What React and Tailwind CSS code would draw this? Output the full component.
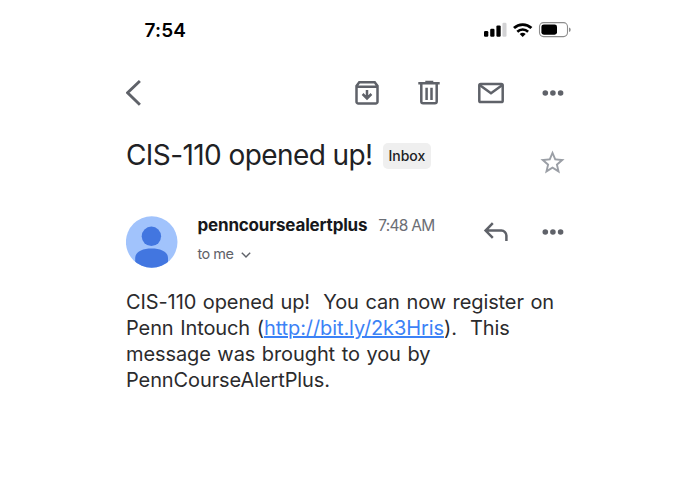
import React from 'react';

function StatusIcons() {
  return (
    <svg width="88" height="20" viewBox="0 0 88 20" className="shrink-0">
      {/* signal */}
      <rect x="1" y="11" width="4.3" height="5.8" rx="1.2" />
      <rect x="7.2" y="8.8" width="4.3" height="8" rx="1.2" />
      <rect x="13.4" y="5.4" width="4.3" height="11.4" rx="1.2" />
      <rect x="19.4" y="2.8" width="4.1" height="14" rx="1.2" fill="#d2d2d4" />
      {/* wifi */}
      <path d="M31 8.1a12.6 12.6 0 0 1 17.4 0" fill="none" stroke="#000" strokeWidth="2.8" />
      <path d="M34.3 11.7a7.8 7.8 0 0 1 10.8 0" fill="none" stroke="#000" strokeWidth="2.6" />
      <path d="M36.7 14.1a4.4 4.4 0 0 1 6 0l-3 2.9z" />
      {/* battery */}
      <rect x="56.5" y="2.6" width="28" height="14" rx="4" fill="none" stroke="#8c8c8c" strokeWidth="1.1" />
      <rect x="58.4" y="4.4" width="15.6" height="10.3" rx="2.4" />
      <path d="M86 7.4a2.4 2.4 0 0 1 0 4.6z" fill="#8c8c8c" />
    </svg>
  );
}

function Icon({ children }) {
  return (
    <svg width="28" height="28" viewBox="0 0 28 28" fill="none" stroke="#5f6269" strokeWidth="2.5" className="shrink-0">
      {children}
    </svg>
  );
}

function Dots() {
  return (
    <Icon>
      <g fill="#5f6269" stroke="none">
        <circle cx="6.3" cy="14" r="2.8" />
        <circle cx="13.9" cy="14" r="2.8" />
        <circle cx="21.6" cy="14" r="2.8" />
      </g>
    </Icon>
  );
}

function Avatar() {
  return (
    <svg width="52" height="52" viewBox="0 0 52 52" className="shrink-0">
      <clipPath id="avatar">
        <circle cx="25.7" cy="26" r="25.8" />
      </clipPath>
      <g clipPath="url(#avatar)">
        <rect width="52" height="52" fill="#a1c3fc" />
        <circle cx="25.4" cy="20.3" r="9.7" fill="#4276e0" />
        <path d="M9.2 54V42c0-6 7-9.4 16.4-9.4S42 36 42 42v12z" fill="#4276e0" />
      </g>
    </svg>
  );
}

function App() {
  return (
    <div className="h-[494px] w-[695px] overflow-hidden bg-white font-['Inter',sans-serif]">
      <div className="ml-[126px] w-[441px]">
        <div className="-mr-1 flex h-[60px] items-end justify-between pb-[20px] pl-[18.5px]">
          <span className="text-[19px] leading-[19px] font-semibold tracking-[0.15px] text-black">7:54</span>
          <StatusIcons />
        </div>

        <div className="flex items-center gap-[34px] pt-[19px]">
          <div className="mr-auto">
            <Icon>
              <path d="M13.9 2L1.6 13.8L13.9 25.8" strokeWidth="2.9" />
            </Icon>
          </div>
          <Icon>
            <path d="M3.5 7L6.3 3.3H21.7L24.5 7V22.7a1.8 1.8 0 0 1-1.8 1.8H5.3a1.8 1.8 0 0 1-1.8-1.8zM3.5 7.8h21M14 11v8.5M9.6 15l4.4 4.4l4.4-4.4" />
          </Icon>
          <Icon>
            <path d="M3.3 4.2h21.4M10.3 2.9h8M6.3 4.5V22.4a1.8 1.8 0 0 0 1.8 1.8H19.9a1.8 1.8 0 0 0 1.8-1.8V4.5M11.6 8.7V21M16.5 8.7V21" />
          </Icon>
          <Icon>
            <rect x="2.3" y="4.9" width="23.4" height="18.2" rx="1.4" />
            <path d="M2.6 6l11.4 8.3L25.4 6" />
          </Icon>
          <Dots />
        </div>

        <div className="flex pt-[28px]">
          <h1 className="h-10 text-[28px] leading-10 tracking-[-0.58px] whitespace-nowrap text-[#202124]">CIS-110 opened up!</h1>
          <span className="mt-2 ml-[10px] h-[26px] rounded-[5px] bg-[#efefef] px-[6px] text-[14px] leading-[26px] font-medium tracking-[-0.05px] text-[#202124]">Inbox</span>
          <svg width="29" height="29" viewBox="0 0 24 24" fill="#9b9fa6" className="mt-[13px] ml-auto shrink-0">
            <path d="M22 9.24l-7.19-.62L12 2 9.19 8.63 2 9.24l5.46 4.73L5.82 21 12 17.27 18.18 21l-1.63-7.03L22 9.24zM12 15.4l-3.76 2.27 1-4.28-3.32-2.88 4.38-.38L12 6.1l1.71 4.04 4.38.38-3.32 2.88 1 4.28L12 15.4z" />
          </svg>
        </div>

        <div className="flex pt-[39px]">
          <Avatar />
          <div className="ml-[19.5px]">
            <div className="flex h-5 items-center whitespace-nowrap">
              <span className="text-[17px] font-bold tracking-[-0.18px] text-[#17181b]">penncoursealertplus</span>
              <span className="ml-[11px] text-[15.5px] tracking-[-0.75px] text-[#6b6e75]">7:48 AM</span>
            </div>
            <div className="mt-[9px] flex h-[18px] items-center text-[14.5px] tracking-[-0.5px] text-[#5f6269]">
              to me
              <svg width="10" height="6" viewBox="0 0 10 6" fill="none" stroke="#5f6269" strokeWidth="1.4" className="mt-[2px] ml-[7px]">
                <path d="M.8 .7L5 4.9L9.2 .7" />
              </svg>
            </div>
          </div>
          <div className="ml-auto flex gap-[29px] pt-[2px]">
            <Icon>
              <path d="M10.8 5.2L3.6 12.6L10.8 19.8M3.8 12.6H19.4a5 5 0 0 1 5 5V23" />
            </Icon>
            <Dots />
          </div>
        </div>

        <div className="mt-[21px] text-[20px] leading-[26px] tracking-[-0.1px] [word-spacing:1.1px] whitespace-pre text-[#2b2b2d]">
          <p>CIS-110 opened up!  You can now register on</p>
          <p>Penn Intouch (<a href="#" className="text-[#3c82f6] underline">http://bit.ly/2k3Hris</a>).  This</p>
          <p>message was brought to you by</p>
          <p>PennCourseAlertPlus.</p>
        </div>
      </div>
    </div>
  );
}

export default App;
